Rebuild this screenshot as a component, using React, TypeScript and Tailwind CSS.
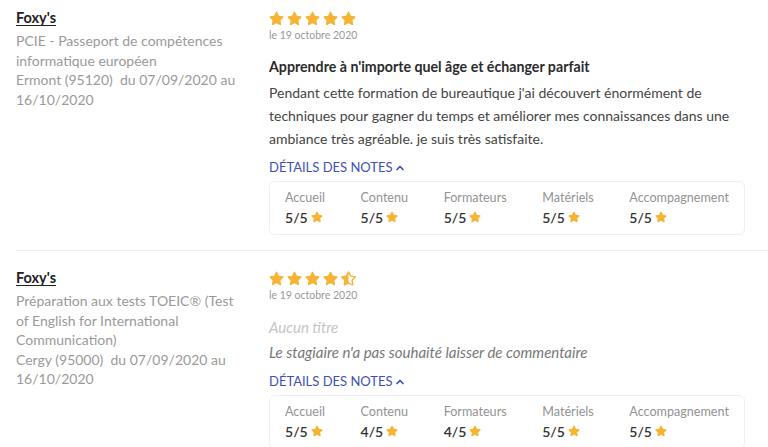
import { ChevronUp } from "lucide-react";
import { FaStar, FaStarHalfAlt } from "react-icons/fa";

type Review = {
  author: string;
  course: string[];
  stars: number;
  date: string;
  title?: string;
  body?: string[];
  notes: [string, number][];
};

const REVIEWS: Review[] = [
  {
    author: "Foxy's",
    course: [
      "PCIE - Passeport de compétences",
      "informatique européen",
      "Ermont (95120)\u00a0 du 07/09/2020 au",
      "16/10/2020",
    ],
    stars: 5,
    date: "le 19 octobre 2020",
    title: "Apprendre à n'importe quel âge et échanger parfait",
    body: [
      "Pendant cette formation de bureautique j'ai découvert énormément de",
      "techniques pour gagner du temps et améliorer mes connaissances dans une",
      "ambiance très agréable. je suis très satisfaite.",
    ],
    notes: [
      ["Accueil", 5],
      ["Contenu", 5],
      ["Formateurs", 5],
      ["Matériels", 5],
      ["Accompagnement", 5],
    ],
  },
  {
    author: "Foxy's",
    course: [
      "Préparation aux tests TOEIC® (Test",
      "of English for International",
      "Communication)",
      "Cergy (95000)\u00a0 du 07/09/2020 au",
      "16/10/2020",
    ],
    stars: 4.5,
    date: "le 19 octobre 2020",
    notes: [
      ["Accueil", 5],
      ["Contenu", 4],
      ["Formateurs", 4],
      ["Matériels", 5],
      ["Accompagnement", 5],
    ],
  },
];

function ReviewRow({ r, first }: { r: Review; first: boolean }) {
  const full = Math.floor(r.stars);
  const half = r.stars - full > 0;
  return (
    <div
      className={`flex border-b border-[#eeeeee] pb-[15px] ${first ? "pt-2" : "pt-[17px]"}`}
    >
      <div className="w-[240px] mr-[13px] shrink-0">
        <div className="text-[14.5px] leading-[20px] font-bold text-[#222] underline underline-offset-2">
          {r.author}
        </div>
        <div className="mt-[3px] text-[14px] leading-[19.5px] text-[#9a9a9a]">
          {r.course.map((l, i) => (
            <div key={i} className="whitespace-nowrap">
              {l}
            </div>
          ))}
        </div>
      </div>

      <div className="w-[476px] shrink-0">
        <div className="flex h-[20px] items-center gap-[3px] text-[#f5b433]">
          {Array.from({ length: full }).map((_, i) => (
            <FaStar key={i} size={15} />
          ))}
          {half && <FaStarHalfAlt size={15} />}
        </div>
        <div className="text-[10.5px] leading-[14px] text-[#999]">{r.date}</div>

        {r.title ? (
          <div className="mt-[15px] text-[14.2px] leading-[20px] font-bold text-[#2b2b2b]">
            {r.title}
          </div>
        ) : (
          <div className="mt-[15px] text-[15px] leading-[20px] italic text-[#c4c4c4]">
            Aucun titre
          </div>
        )}

        {r.body ? (
          <div className="mt-[4px] text-[14px] leading-[23px] text-[#444]">
            {r.body.map((l, i) => (
              <div key={i} className="whitespace-nowrap">
                {l}
              </div>
            ))}
          </div>
        ) : (
          <div className="mt-[4px] text-[15px] leading-[23px] italic text-[#777]">
            Le stagiaire n'a pas souhaité laisser de commentaire
          </div>
        )}

        <div className="mt-[9px] flex h-[18px] items-center text-[13px] text-[#4150b2]">
          <span>DÉTAILS DES NOTES</span>
          <ChevronUp size={12} strokeWidth={3.5} className="ml-[1px]" />
        </div>

        <div className="mt-[4px] flex justify-between rounded-md border border-[#efefef] px-[15px] pt-[7px] pb-[7px]">
          {r.notes.map(([label, v]) => (
            <div key={label}>
              <div className="text-[12.6px] leading-[18px] text-[#939393]">{label}</div>
              <div className="flex h-[20px] items-center gap-[3px] text-[14px] font-semibold text-[#333]">
                <span>{v}/5</span>
                <FaStar size={12} className="text-[#f5b433]" />
              </div>
            </div>
          ))}
        </div>
      </div>
    </div>
  );
}

export default function App() {
  return (
    <div
      className="h-[447px] w-[768px] overflow-hidden bg-white pl-4"
      style={{ fontFamily: "Lato, 'Noto Sans', sans-serif" }}
    >
      {REVIEWS.map((r, i) => (
        <ReviewRow key={i} r={r} first={i === 0} />
      ))}
    </div>
  );
}
